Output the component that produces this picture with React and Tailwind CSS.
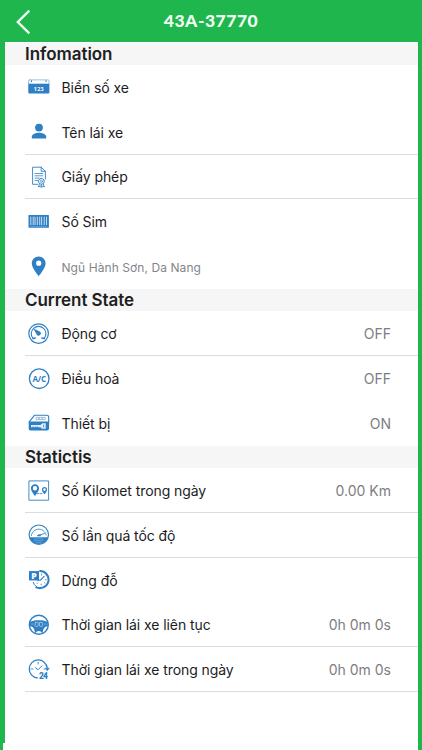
import React from 'react';

const BLUE = '#2e7fc4';

function Icon({ children }) {
  return (
    <svg width="22" height="22" viewBox="0 0 22 22" fill="none" stroke={BLUE} strokeLinecap="round" strokeLinejoin="round">
      {children}
    </svg>
  );
}

const PlateIcon = () => (
  <Icon>
    <rect x="0.6" y="3.9" width="20.4" height="13.4" rx="0.8" fill="#fff" stroke="#7fb0db" strokeWidth="0.8" />
    <path d="M0.5 7.7h20.7v9.5H0.5z" fill={BLUE} stroke="none" />
    <path d="M3.5 4.7v1M18 4.7v1" strokeWidth="1" />
    <text x="10.9" y="14.5" textAnchor="middle" fontFamily="Open Sans, sans-serif" fontSize="5.4" fontWeight="700" letterSpacing="0.3" fill="#fff" stroke="none">123</text>
  </Icon>
);

const DriverIcon = () => (
  <Icon>
    <g fill={BLUE} stroke="none">
      <circle cx="11" cy="6.6" r="3.9" />
      <path d="M3.8 17.5v-1.7c0-2.6 4.6-4 7.2-4s7.2 1.4 7.2 4v1.7z" />
    </g>
  </Icon>
);

const LicenseIcon = () => (
  <Icon>
    <path d="M9.5 18.3H4.6V1.2h8.6l4.2 4.1v7.8M13.2 1.2v4.1h4.2" strokeWidth="0.9" />
    <path d="M7 7.5h7.8M7 9.8h7.8M7 12.1h4M7 14.4h2.8" strokeWidth="0.8" />
    <circle cx="13.3" cy="15.3" r="2.9" strokeWidth="1" fill="#fff" strokeDasharray="1.6 0.6" />
    <circle cx="13.3" cy="15.3" r="1.2" strokeWidth="0.7" />
    <path d="M11.5 17.8l-1.1 3 1.7-.4.8.9.5-2.6.6 2.6.9-.9 1.5.4-1.2-3" strokeWidth="0.9" />
  </Icon>
);

const SimIcon = () => (
  <Icon>
    <rect x="0.5" y="3.9" width="20.4" height="12.9" rx="0.5" fill={BLUE} stroke="none" />
    <path d="M2.8 5.7v8.4M5.2 5.7v8.4M7 5.7v8.4M9.3 5.7v8.4M11.7 5.7v8.4M13.6 5.7v8.4M16.2 5.7v8.4M18.5 5.7v8.4" stroke="#c5dcf0" strokeWidth="1" strokeLinecap="butt" />
    <path d="M3 15.5h15.5" stroke="#8dbbe0" strokeWidth="0.5" strokeDasharray="1 1" />
  </Icon>
);

const PinIcon = () => (
  <Icon>
    <path fillRule="evenodd" fill={BLUE} stroke="none" d="M10.7.4C6.8.4 3.8 3.4 3.8 7.3c0 5 6.9 12.9 6.9 12.9s6.9-7.9 6.9-12.9c0-3.9-3-6.900-6.900-6.900zm0 9.400a2.600 2.600 0 1 1 0-5.200 2.600 2.600 0 0 1 0 5.200z" />
  </Icon>
);

const EngineIcon = () => (
  <Icon>
    <circle cx="10.6" cy="10.6" r="9.8" strokeWidth="1.2" />
    <path d="M5 15.4a7.300 7.300 0 1 1 11.200 0" strokeWidth="1.1" />
    <path d="M5 15.600l2.300-.6M16.200 15.600l-2.300-.6" strokeWidth="1.5" />
    <path d="M5.300 5.500l7 3.300a2.300 2.300 0 1 1-3.500 3z" fill={BLUE} stroke="none" />
  </Icon>
);

const AcIcon = () => (
  <Icon>
    <circle cx="11.2" cy="10.7" r="9.8" strokeWidth="1.3" />
    <text x="11.2" y="13.5" textAnchor="middle" fontFamily="Open Sans, sans-serif" fontSize="8" fontWeight="700" textLength="13.6" fill={BLUE} stroke="none">A/C</text>
  </Icon>
);

const DeviceIcon = () => (
  <Icon>
    <path d="M1.2 9.800L6.400 3.300h12.200c1.300 0 2.100.7 2.100 1.900V10" strokeWidth="1.1" />
    <path d="M.7 9.400h20.400v6.700c0 1.400-.8 2.300-2.200 2.300H2.600c-1.200 0-1.900-.8-1.900-2z" fill={BLUE} stroke="none" />
    <path d="M8.400 5.300h2.200v2.400H8.400zM11.700 5.300h2.200v2.400h-2.200zM15 5.300h2.200v2.400H15z" strokeWidth="0.7" stroke="#6fa6d6" />
    <path d="M3 12.900h9.600c.6-1.200 1.600-1.700 3.100-1.700h2v5.600h-2c-1.500 0-2.500-.5-3.100-1.500H3z" fill="#e3eff8" stroke="none" />
    <path d="M15.600 13.100v1.900M5 15.500v-.7M7.200 15.500v-.7M9.400 15.500v-.7" strokeWidth="0.8" />
  </Icon>
);

const DistanceIcon = () => (
  <Icon>
    <rect x="1.3" y="0.900" width="19.3" height="19.3" strokeWidth="0.9" />
    <path fillRule="evenodd" fill={BLUE} stroke="none" d="M7 4.300c-2.300 0-4.100 1.800-4.100 4C2.900 11.300 7 16 7 16s4.100-4.700 4.100-7.700c0-2.200-1.800-4-4.100-4zm0 6.200a2.200 2.200 0 1 1 0-4.400 2.200 2.200 0 0 1 0 4.400z" />
    <path fillRule="evenodd" fill={BLUE} stroke="none" d="M16.500 6.900c-1.500 0-2.600 1.100-2.600 2.600 0 2 2.600 4.800 2.600 4.800s2.600-2.800 2.600-4.800c0-1.500-1.100-2.600-2.600-2.600zm0 4a1.300 1.300 0 1 1 0-2.600 1.300 1.300 0 0 1 0 2.600z" />
    <path d="M9.500 13.600h1.600M12.400 13.600h1.600" strokeWidth="0.8" />
  </Icon>
);

const SpeedIcon = () => (
  <Icon>
    <circle cx="10.8" cy="10.7" r="9.7" strokeWidth="1.1" />
    <path d="M1.500 13.200h18.600a9.800 9.800 0 0 1-18.600 0z" fill={BLUE} stroke="none" />
    <path d="M3.400 11.500a7.500 7.500 0 0 1 14.800 0" strokeWidth="0.9" strokeDasharray="1.3 0.8" />
    <path d="M9.500 11.700l6.800-2.100" strokeWidth="0.9" />
    <ellipse cx="11.200" cy="11.400" rx="1.8" ry="0.9" fill={BLUE} stroke="none" />
    <path d="M7 14.800h7.800v1.800H7zM8.200 18.300h5.400" stroke="#79aedb" strokeWidth="0.6" />
  </Icon>
);

const ParkingIcon = () => (
  <Icon>
    <path d="M11.300 2.100a8.500 8.500 0 1 1-3.700 15.700" strokeWidth="2" strokeLinecap="butt" />
    <path d="M5.300 13.400a7.500 7.500 0 0 0 2.600 3.900" strokeWidth="1" />
    <path d="M13.500 5v1M18.300 10.700h-1M13.200 16.100v-1M16.800 6.900l-.6.6M17 14.300l-.7-.6M9 14.600l.7-.7" strokeWidth="0.8" />
    <path d="M15.800 7.700l-3.300 3.500h-2.800" strokeWidth="1.1" />
    <rect x="1" y="2.100" width="10" height="9.300" fill={BLUE} stroke="none" />
    <text x="6" y="9.900" textAnchor="middle" fontFamily="Open Sans, sans-serif" fontSize="8.6" fontWeight="800" fill="#fff" stroke="none">P</text>
  </Icon>
);

const WheelIcon = () => (
  <Icon>
    <circle cx="10.8" cy="10.7" r="9.5" strokeWidth="1.4" />
    <path d="M1.800 8c3-1.300 5.600-1.700 9-1.700s6 .4 9 1.700v4.200c-2.600.2-3.800 1.300-4.400 3.300l-1.200 4.100c-.9-2-1.900-2.700-3.400-2.700s-2.500.7-3.400 2.700l-1.200-4.100c-.6-2-1.800-3.100-4.400-3.300z" fill={BLUE} stroke="none" />
    <rect x="7.100" y="8.400" width="3.100" height="3.900" rx="0.5" stroke="#a9cce8" strokeWidth="0.8" />
    <rect x="11.500" y="8.400" width="3.100" height="3.900" rx="0.5" stroke="#a9cce8" strokeWidth="0.8" />
    <path d="M3.700 10.100h1.500M16.500 10.100H18" stroke="#a9cce8" strokeWidth="0.7" />
  </Icon>
);

const DayIcon = () => (
  <Icon>
    <path d="M9.300 18.900A9 9 0 1 1 19.200 9" strokeWidth="1.3" />
    <path d="M17.400 9.200h3.900l-1.900 2.500z" fill={BLUE} strokeWidth="0.5" />
    <path d="M10.200 3.400V5M3 10h2M16 10h1.200" strokeWidth="0.9" />
    <path d="M7.500 8.700l2.500 2.100 4-4" strokeWidth="1" />
    <text x="15.400" y="19.700" textAnchor="middle" fontFamily="Roboto, sans-serif" fontSize="8.4" fontWeight="900" textLength="8.8" fill={BLUE} stroke="none">24</text>
  </Icon>
);

const sections = [
  {
    title: 'Infomation',
    rows: [
      { icon: PlateIcon, label: 'Biển số xe' },
      { icon: DriverIcon, label: 'Tên lái xe', line: true },
      { icon: LicenseIcon, label: 'Giấy phép', line: true },
      { icon: SimIcon, label: 'Số Sim' },
      { icon: PinIcon, label: 'Ngũ Hành Sơn, Da Nang', muted: true },
    ],
  },
  {
    title: 'Current State',
    rows: [
      { icon: EngineIcon, label: 'Động cơ', value: 'OFF', line: true },
      { icon: AcIcon, label: 'Điều hoà', value: 'OFF' },
      { icon: DeviceIcon, label: 'Thiết bị', value: 'ON' },
    ],
  },
  {
    title: 'Statictis',
    rows: [
      { icon: DistanceIcon, label: 'Số Kilomet trong ngày', value: '0.00 Km', line: true },
      { icon: SpeedIcon, label: 'Số lần quá tốc độ', line: true },
      { icon: ParkingIcon, label: 'Dừng đỗ' },
      { icon: WheelIcon, label: 'Thời gian lái xe liên tục', value: '0h 0m 0s', line: true },
      { icon: DayIcon, label: 'Thời gian lái xe trong ngày', value: '0h 0m 0s', line: true },
    ],
  },
];

function Row({ icon: RowIcon, label, value, line, muted }) {
  return (
    <div className={`ml-5 flex h-[44.8px] items-center border-b pt-px pr-[26.5px] pl-[3px] ${line ? 'border-[#dcdcde]' : 'border-transparent'}`}>
      <RowIcon />
      <span className={`ml-[11.5px] flex-1 whitespace-nowrap ${muted ? 'pt-0.5 text-[12px] tracking-[0.08px] text-[#85858a]' : 'text-[14px] tracking-[-0.08px] text-[#1c1c1e]'}`}>
        {label}
      </span>
      {value && <span className="text-[14px] text-[#7d7d82]">{value}</span>}
    </div>
  );
}

function App() {
  return (
    <div className="flex h-[750px] w-[422px] flex-col overflow-hidden bg-[#1fb74d] font-['Inter',sans-serif]">
      {/* Header */}
      <header className="grid h-[42px] shrink-0 grid-cols-[1fr_auto_1fr] items-center">
        <svg className="mt-0.5 ml-4" width="15" height="26" viewBox="0 0 15 26" fill="none" stroke="#effff2" strokeWidth="2.4">
          <path d="M13.300 1.600L1.800 13l11.500 11.400" />
        </svg>
        <h1 className="pt-px font-['Lato',sans-serif] text-[17.5px] font-black tracking-[0.5px] text-[#f0fff3]">43A-37770</h1>
      </header>

      {/* Vehicle details */}
      <main className="mr-[4.5px] ml-[5px] flex-1 bg-white pt-[0.6px]">
        {sections.map((section) => (
          <section key={section.title}>
            <h2 className="flex h-[22.4px] items-center bg-[#f6f6f6] pt-0.5 pl-5 text-[17px] font-semibold tracking-[-0.05px] text-[#202022]">
              {section.title}
            </h2>
            {section.rows.map((row) => (
              <Row key={row.label} {...row} />
            ))}
          </section>
        ))}
      </main>
      <div className="mr-[4.5px] ml-[3px] h-[7px] shrink-0 bg-white" />
    </div>
  );
}

export default App;
